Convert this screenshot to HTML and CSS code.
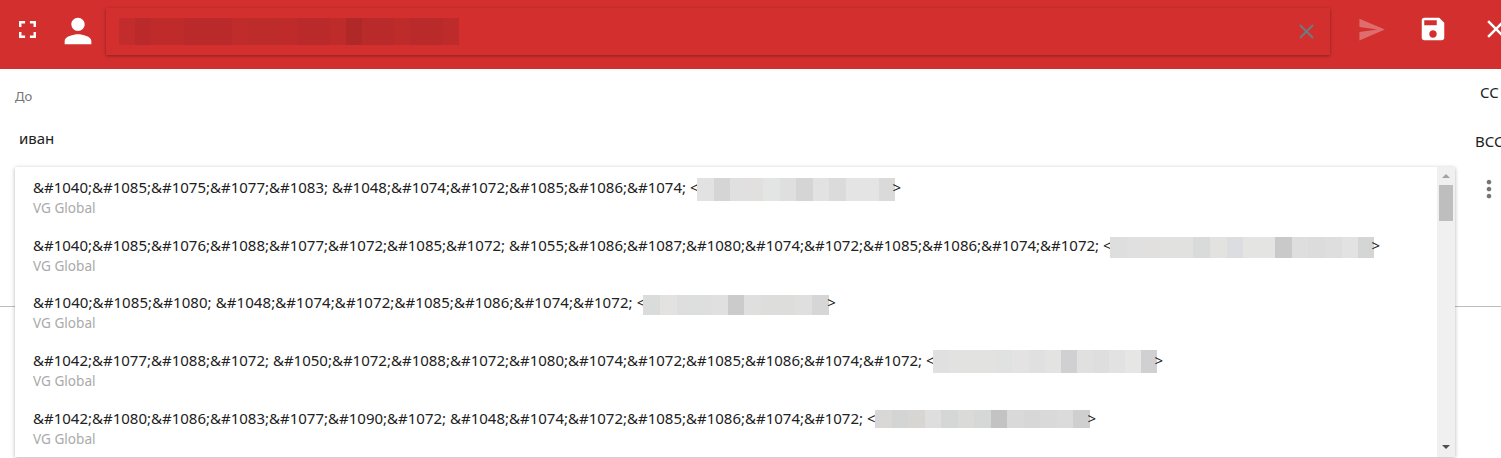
FILE: index.html
```html
<!DOCTYPE html>
<html lang="en">

<head>
  <meta charset="UTF-8">
  <meta name="viewport" content="width=device-width, initial-scale=1.0">
  <title>Compose</title>
  <link rel="stylesheet" href="styles.css">
</head>

<body>
  <div class="page">
    <header class="toolbar">
      <button class="tool tool-full">
        <svg width="29" height="29" viewBox="0 0 24 24"><path fill="#fff" d="M7 14H5v5h5v-2H7v-3zm-2-4h2V7h3V5H5v5zm12 7h-3v2h5v-5h-2v3zM14 5v2h3v3h2V5h-5z"/></svg>
      </button>
      <button class="tool tool-person">
        <svg width="40" height="40" viewBox="0 0 24 24"><path fill="#fff" d="M12 12c2.21 0 4-1.79 4-4s-1.79-4-4-4-4 1.79-4 4 1.79 4 4 4zm0 2c-2.67 0-8 1.34-8 4v2h16v-2c0-2.66-5.33-4-8-4z"/></svg>
      </button>
      <div class="subject">
        <div class="subject-text"></div>
        <svg class="subject-clear" width="25" height="25" viewBox="0 0 24 24"><path fill="#6f7a7a" d="M19 6.41 17.59 5 12 10.59 6.41 5 5 6.41 10.59 12 5 17.59 6.41 19 12 13.41 17.59 19 19 17.59 13.41 12z"/></svg>
      </div>
      <button class="tool tool-send">
        <svg width="29" height="29" viewBox="0 0 24 24"><path fill="#fff" fill-opacity=".3" d="M2.01 21 23 12 2.01 3 2 10l15 2-15 2z"/></svg>
      </button>
      <button class="tool tool-save">
        <svg width="30" height="30" viewBox="0 0 24 24"><path fill="#fff" d="M17 3H5c-1.11 0-2 .9-2 2v14c0 1.1.89 2 2 2h14c1.1 0 2-.9 2-2V7l-4-4zm-5 16c-1.66 0-3-1.34-3-3s1.34-3 3-3 3 1.34 3 3-1.34 3-3 3zm3-10H5V5h10v4z"/></svg>
      </button>
      <button class="tool tool-close">
        <svg width="30" height="30" viewBox="0 0 24 24"><path fill="#fff" d="M19 6.41 17.59 5 12 10.59 6.41 5 5 6.41 10.59 12 5 17.59 6.41 19 12 13.41 17.59 19 19 17.59 13.41 12z"/></svg>
      </button>
    </header>

    <section class="recipients">
      <div class="fields">
        <div class="field-label">До</div>
        <div class="field-value">иван</div>
      </div>
      <div class="extras">
        <div class="extra-cc">CC</div>
        <div class="extra-bcc">BCC</div>
        <svg class="extra-more" width="28" height="28" viewBox="0 0 24 24"><path fill="#757575" d="M12 8c1.1 0 2-.9 2-2s-.9-2-2-2-2 .9-2 2 .9 2 2 2zm0 2c-1.1 0-2 .9-2 2s.9 2 2 2 2-.9 2-2-.9-2-2-2zm0 6c-1.1 0-2 .9-2 2s.9 2 2 2 2-.9 2-2-.9-2-2-2z"/></svg>
      </div>
    </section>

    <div class="suggest">
      <ul class="suggest-list">
        <li class="suggest-item">
          <div class="suggest-name">&amp;#1040;&amp;#1085;&amp;#1075;&amp;#1077;&amp;#1083; &amp;#1048;&amp;#1074;&amp;#1072;&amp;#1085;&amp;#1086;&amp;#1074; &lt;<span class="blur blur-1"></span>&gt;</div>
          <div class="suggest-org">VG Global</div>
        </li>
        <li class="suggest-item">
          <div class="suggest-name">&amp;#1040;&amp;#1085;&amp;#1076;&amp;#1088;&amp;#1077;&amp;#1072;&amp;#1085;&amp;#1072; &amp;#1055;&amp;#1086;&amp;#1087;&amp;#1080;&amp;#1074;&amp;#1072;&amp;#1085;&amp;#1086;&amp;#1074;&amp;#1072; &lt;<span class="blur blur-2"></span>&gt;</div>
          <div class="suggest-org">VG Global</div>
        </li>
        <li class="suggest-item">
          <div class="suggest-name suggest-name-wide">&amp;#1040;&amp;#1085;&amp;#1080; &amp;#1048;&amp;#1074;&amp;#1072;&amp;#1085;&amp;#1086;&amp;#1074;&amp;#1072; &lt;<span class="blur blur-3"></span>&gt;</div>
          <div class="suggest-org">VG Global</div>
        </li>
        <li class="suggest-item">
          <div class="suggest-name">&amp;#1042;&amp;#1077;&amp;#1088;&amp;#1072; &amp;#1050;&amp;#1072;&amp;#1088;&amp;#1072;&amp;#1080;&amp;#1074;&amp;#1072;&amp;#1085;&amp;#1086;&amp;#1074;&amp;#1072; &lt;<span class="blur blur-4"></span>&gt;</div>
          <div class="suggest-org">VG Global</div>
        </li>
        <li class="suggest-item">
          <div class="suggest-name">&amp;#1042;&amp;#1080;&amp;#1086;&amp;#1083;&amp;#1077;&amp;#1090;&amp;#1072; &amp;#1048;&amp;#1074;&amp;#1072;&amp;#1085;&amp;#1086;&amp;#1074;&amp;#1072; &lt;<span class="blur blur-5"></span>&gt;</div>
          <div class="suggest-org">VG Global</div>
        </li>
      </ul>
      <div class="scroll">
        <span class="scroll-up"></span>
        <span class="scroll-thumb"></span>
        <span class="scroll-down"></span>
      </div>
    </div>
  </div>
</body>

</html>
```

FILE: styles.css
```css
html,
body {
  margin: 0;
  height: 100%;
  overflow: hidden;
  background-color: #fff;
}

body {
  font-family: "Noto Sans", "Open Sans", sans-serif;
  color: #212121;
}

.page {
  position: relative;
  width: 1501px;
  height: 458px;
  overflow: hidden;
}

.toolbar {
  display: flex;
  align-items: flex-start;
  height: 69px;
  background-color: #d32f2f;
}

.tool {
  display: flex;
  flex: none;
  margin-top: 15px;
  padding: 0;
  border: 0;
  background: none;
}

.tool-full {
  margin-left: 13px;
}

.tool-person {
  margin-top: 11px;
  margin-left: 16px;
}

.tool-send {
  margin-left: 27px;
}

.tool-save {
  margin-top: 14px;
  margin-left: 32px;
}

.tool-close {
  margin-top: 14px;
  margin-left: 33px;
}

.subject {
  display: flex;
  align-items: center;
  justify-content: space-between;
  flex: none;
  box-sizing: border-box;
  width: 1224px;
  height: 47px;
  margin: 8px 0 0 8px;
  padding: 0 11px 0 13px;
  background-color: #d32f2f;
  box-shadow: 0 1px 3px rgba(0, 0, 0, 0.35);
}

.subject-text {
  width: 340px;
  height: 27px;
  background: linear-gradient(90deg,
      #c22c2c 0 16px, #bb2a2a 16px 32px, #bf2b2b 32px 65px, #ba2a2a 65px 113px,
      #c02c2c 113px 129px, #bd2b2b 129px 162px, #bf2b2b 162px 178px, #bb2a2a 178px 211px,
      #bd2b2b 211px 227px, #b12828 227px 243px, #b92a2a 243px 275px, #bd2b2b 275px 291px,
      #b92a2a 291px 324px, #bd2b2b 324px 340px);
}

.recipients {
  display: flex;
  justify-content: space-between;
  height: 237px;
  border-bottom: 1px solid #bdbdbd;
}

.fields {
  padding: 19px 0 0 15px;
}

.field-label {
  font-size: 13px;
  line-height: 16px;
  color: #757575;
}

.field-value {
  margin: 24px 0 0 4px;
  font-size: 15px;
  line-height: 20px;
}

.extras {
  display: flex;
  flex-direction: column;
  width: 27px;
  font-size: 15px;
  line-height: 20px;
  white-space: nowrap;
}

.extra-cc {
  margin: 13px 0 0 6px;
}

.extra-bcc {
  margin: 29px 0 0 1px;
}

.extra-more {
  flex: none;
  margin: 24px 0 0 1px;
}

/* dropdown lies over the recipient row and the divider */
.suggest {
  position: absolute;
  left: 15px;
  top: 167px;
  display: flex;
  width: 1440px;
  height: 290px;
  background-color: #fff;
  box-shadow: 0 1px 4px rgba(0, 0, 0, 0.3);
}

.suggest-list {
  flex: 1;
  margin: 0;
  padding: 0;
  list-style: none;
  overflow: hidden;
}

.suggest-item {
  box-sizing: border-box;
  height: 57.7px;
  padding: 10px 0 0 18px;
}

.suggest-name {
  height: 22px;
  font-size: 15px;
  line-height: 20px;
  white-space: nowrap;
}

.suggest-name-wide {
  letter-spacing: 0.08px;
}

.suggest-org {
  font-size: 13.6px;
  line-height: 18px;
  color: #aaa;
}

.blur {
  display: inline-block;
  vertical-align: top;
  margin-left: -2px;
  margin-right: -2px;
  margin-bottom: -30px;
}

.blur-1 {
  width: 198px;
  height: 23px;
  margin-top: 1px;
  background: linear-gradient(90deg,
      #e2e2e2 0 17px, #d5d5d5 17px 33px, #e0e0e0 33px 50px, #e2e0de 50px 66px,
      #e3e5e4 66px 83px, #dfdfdf 83px 99px, #d5d5d5 99px 116px, #e2e2e2 116px 132px,
      #dbdbdb 132px 149px, #e4e4e4 149px 182px, #dadada 182px 198px);
}

.blur-2 {
  width: 264px;
  height: 21px;
  margin-top: 2px;
  background: linear-gradient(90deg,
      #dedede 0 17px, #dfe0df 17px 33px, #e2e0de 33px 50px, #e1e1df 50px 83px,
      #d9dada 83px 100px, #e2e2de 100px 117px, #dcdde0 117px 133px, #e4e5e3 133px 165px,
      #c9c9c9 165px 182px, #dedede 182px 198px, #dcdcdc 198px 215px, #dedede 215px 232px,
      #e2e2e2 232px 248px, #d4d6d6 248px 264px);
}

.blur-3 {
  width: 186px;
  height: 20px;
  margin-top: 3px;
  background: linear-gradient(90deg,
      #dadcdc 0 17px, #e3e2e0 17px 34px, #dedede 34px 51px, #dcdfde 51px 68px,
      #e0e0e0 68px 85px, #cbcbcb 85px 101px, #dfdfdf 101px 118px, #dddddc 118px 151px,
      #dfdfdf 151px 169px, #d6d6d6 169px 186px);
}

.blur-4 {
  width: 224px;
  height: 23px;
  margin-top: 0;
  background: linear-gradient(90deg,
      #e0e0e0 0 16px, #e2e2e0 16px 64px, #e0e2e2 64px 79px, #e3e3e3 79px 96px,
      #e0e0e0 96px 112px, #e3e3e1 112px 128px, #d0d0d2 128px 144px, #e0e0e0 144px 160px,
      #dedede 160px 176px, #e2e2e2 176px 192px, #e6e6e4 192px 208px, #d0d0d2 208px 224px);
}

.blur-5 {
  width: 215px;
  height: 18px;
  margin-top: 2px;
  margin-left: -1px;
  background: linear-gradient(90deg,
      #d9d8d6 0 17px, #d3d5d4 17px 33px, #d7d6d3 33px 50px, #dedede 50px 66px,
      #d5d7d7 66px 83px, #dadad8 83px 99px, #d6d8d8 99px 116px, #c3c3c3 116px 132px,
      #d9d9d9 132px 149px, #d7d7d7 149px 165px, #d9d9d9 165px 182px, #dbdbdb 182px 198px,
      #cfcfcf 198px 215px);
}

.scroll {
  position: relative;
  flex: none;
  width: 18px;
  background-color: #f0f0f0;
}

.scroll-thumb {
  position: absolute;
  left: 2px;
  top: 18px;
  width: 14px;
  height: 36px;
  background-color: #bebebe;
}

.scroll-up,
.scroll-down {
  position: absolute;
  left: 5px;
  width: 0;
  height: 0;
  border-left: 4px solid transparent;
  border-right: 4px solid transparent;
}

.scroll-up {
  top: 7px;
  border-bottom: 4px solid #a3a3a3;
}

.scroll-down {
  bottom: 8px;
  border-top: 4px solid #505050;
}
```
